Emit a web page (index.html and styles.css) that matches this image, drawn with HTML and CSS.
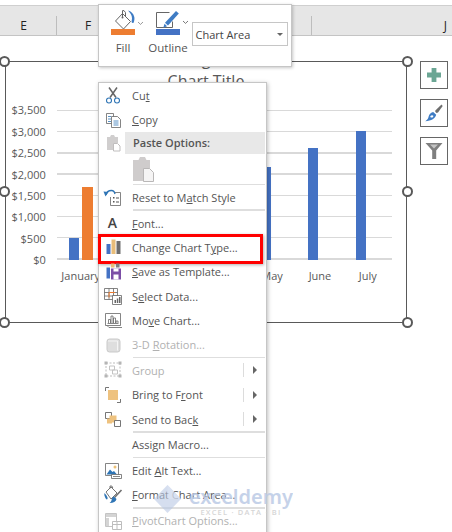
FILE: index.html
```html
<!DOCTYPE html>
<html lang="en">
<head>
<meta charset="utf-8">
<title>Chart context menu</title>
<link rel="stylesheet" href="styles.css">
</head>
<body>
<div class="stage">
  <header class="sheet-head">
    <div class="col col-e">E</div>
    <div class="col col-f">F</div>
    <div class="col col-mid"></div>
    <div class="col col-j">J</div>
  </header>

  <section class="chart">
    <div class="title">g<br>Chart Title</div>
    <div class="plot-row">
      <div class="axis">
        <span>$3,500</span><span>$3,000</span><span>$2,500</span><span>$2,000</span><span>$1,500</span><span>$1,000</span><span>$500</span><span>$0</span>
      </div>
      <div class="plot">
        <div class="grid"><i></i><i></i><i></i><i></i><i></i><i></i><i></i><i></i></div>
        <div class="bars">
          <div class="cat"><b class="bar blue" style="height:14.3%"></b><b class="bar orange" style="height:48.6%"></b></div>
          <div class="cat"><b class="bar blue" style="height:50%"></b><b class="bar orange" style="height:0"></b></div>
          <div class="cat"><b class="bar blue" style="height:60%"></b><b class="bar orange" style="height:0"></b></div>
          <div class="cat"><b class="bar blue" style="height:55%"></b><b class="bar orange" style="height:0"></b></div>
          <div class="cat"><b class="bar blue" style="height:62%"></b><b class="bar orange" style="height:0"></b></div>
          <div class="cat"><b class="bar blue" style="height:74.3%"></b><b class="bar orange" style="height:0"></b></div>
          <div class="cat"><b class="bar blue" style="height:85.7%"></b><b class="bar orange" style="height:0"></b></div>
        </div>
      </div>
    </div>
    <div class="cats">
      <span>January</span><span></span><span></span><span></span><span>May</span><span>June</span><span>July</span>
    </div>
    <i class="handle h-tl"></i><i class="handle h-ml"></i><i class="handle h-bl"></i>
    <i class="handle h-tr"></i><i class="handle h-mr"></i><i class="handle h-br"></i>
  </section>

  <aside class="side-tools">
    <div class="side-btn">
      <svg width="16" height="16" viewBox="0 0 16 16"><path fill="#6ba694" d="M5.600 1h4.800v4.600H15v4.800h-4.600V15H5.600v-4.600H1V5.600h4.600z"/></svg>
    </div>
    <div class="side-btn">
      <svg width="18" height="18" viewBox="0 0 18 18"><path fill="#6e6e6e" d="M16.500.5l1.200 1.500-4.700 6.500-1.500.5-1.300-1.300.4-1.500z"/><path fill="#3f7cc4" d="M8.200 8l3 2.800c-1 3.500-4.500 6-11 6.500 2.500-1.500 3-3 3.500-5 .5-2.300 2.500-4 4.500-4.300z"/><path fill="#fff" d="M5.500 12c.8-.9 2.200-1 2.800-.2.400.8-.7 2-1.800 1.800-1-.1-1.500-.9-1-1.600z"/></svg>
    </div>
    <div class="side-btn">
      <svg width="18" height="18" viewBox="0 0 18 18"><path fill="#7f7f7f" d="M.5 1h17l-6.300 7.500V17H7.200V8.500z"/><path fill="#c4c4c4" d="M5 2.500h8L9 6.500z"/></svg>
    </div>
  </aside>

  <div class="toolbar">
    <div class="tool">
      <svg class="tool-icon" width="24" height="26" viewBox="0 0 24 26">
        <path fill="none" stroke="#666" stroke-width="1" d="M11.500 4.500l8 8-7 7.500-8-8z"/>
        <path fill="none" stroke="#666" stroke-width="1" d="M11.500 8.500V1.600h1.500l1.500 2v4"/>
        <circle cx="11.500" cy="8.500" r="1" fill="#666"/>
        <path fill="#3f7cc4" d="M17 1.500c3 .6 5.500 3 6.300 6.500.3 1.500.2 3.500-.6 5.500-.6.800-1.500.8-2-.2-.3-1 .3-2.500.3-4 0-3-2-5.800-4-7.800z"/>
        <rect x="0" y="20" width="24" height="6" fill="#ed7d31"/>
        <path fill="#555" d="M27 13l2.500 2.400 2.500-2.400" stroke="#555" stroke-width=".6" fill-opacity="0"/>
      </svg>
      <span>Fill</span>
    </div>
    <div class="tool tool-wide">
      <svg class="tool-icon" width="24" height="26" viewBox="0 0 24 26">
        <path fill="none" stroke="#666" stroke-width="1" d="M13.500 3.500H.5v15h16v-6"/>
        <path fill="#3f7cc4" d="M20 2l2.800 2.600L12 16.500 9 13.800z"/>
        <path fill="#3f7cc4" d="M8.500 14.800l2.600 2.500-3.800 1.400z"/>
        <rect x="0" y="20" width="24" height="6" fill="#4472c4"/>
        <path d="M27 12l2.500 2.400 2.500-2.400" fill="none" stroke="#555" stroke-width=".8"/>
      </svg>
      <span>Outline</span>
    </div>
    <div class="combo"><span>Chart Area</span><i class="combo-arrow"></i></div>
  </div>

  <nav class="menu">
    <div class="row">
      <svg class="ico" viewBox="0 0 20 20"><path fill="none" stroke="#666" stroke-width="1.500" d="M6 1.500l7 10M14 1.500l-7 10"/><circle cx="6" cy="14.500" r="2.500" fill="none" stroke="#2f75b5" stroke-width="1.100"/><circle cx="14" cy="14.500" r="2.500" fill="none" stroke="#2f75b5" stroke-width="1.100"/></svg>
      <span class="label">Cu<u>t</u></span>
    </div>
    <div class="row">
      <svg class="ico" viewBox="0 0 20 20"><path fill="#fff" stroke="#666" stroke-width=".8" d="M3.500 3.500h7v10h-7z"/><path fill="#fff" stroke="#666" stroke-width=".8" d="M8.500 6.500h6l3 3v8h-9z"/><path stroke="#2f75b5" stroke-width=".8" d="M5 6.500h3M5 9h3M5 11.500h3M10.500 11h5M10.500 13h5M10.500 15h5"/></svg>
      <span class="label"><u>C</u>opy</span>
    </div>
    <div class="row row-head">
      <svg class="ico" viewBox="0 0 20 20"><path fill="#d0cece" d="M4 4h3l1-2h3l1 2h3v6h-4v7H4z"/><path fill="#fff" stroke="#c0bebe" d="M10.500 10.500h4l2.500 2.500v5h-6.500z"/></svg>
      <span class="head-label">Paste Options:</span>
    </div>
    <div class="row-paste">
      <svg width="24" height="26" viewBox="0 0 24 26"><path fill="#cfcccc" d="M2 4h5.500l1.500-3h5l1.500 3H19v9h-6v12H2z"/><path fill="#f5f4f4" stroke="#b9b7b7" d="M12.500 12.500h6l4 4v9h-10z"/></svg>
    </div>
    <div class="sep"></div>
    <div class="row">
      <svg class="ico" viewBox="0 0 20 20"><path fill="none" stroke="#666" stroke-width=".8" d="M7.500 5.500h10v13h-10z"/><path fill="#fff" d="M7 4h4v6H7z"/><path fill="#555" d="M10 10h1.500v1.500H10zM13 10.500h3v1H13zM10 14h1.500v1.500H10zM13 14.500h3v1H13z"/><path fill="none" stroke="#2f75b5" stroke-width="1.300" d="M3 8c.5-3 2.500-4.500 5.500-4.500 2 0 3 1 3.500 3.500"/><path fill="#2f75b5" d="M.5 4.500l5 .5-3 4.500z"/></svg>
      <span class="label">Reset to M<u>a</u>tch Style</span>
    </div>
    <div class="sep"></div>
    <div class="row">
      <span class="ico ico-a">A</span>
      <span class="label"><u>F</u>ont...</span>
    </div>
    <div class="row row-alert">
      <svg class="ico" viewBox="0 0 20 20"><path fill="#4472c4" d="M3.500 7h4v10h-4z"/><path fill="#e8bd7a" d="M8.500 2.500h4V17h-4z"/><path fill="#6e6e6e" d="M13.500 4h4v13h-4z"/></svg>
      <span class="label">Change Chart T<u>y</u>pe...</span>
    </div>
    <div class="row">
      <svg class="ico" viewBox="0 0 20 20"><path fill="#4472c4" d="M3.500 5.500h3.500v11H3.500z"/><path fill="#e8bd7a" d="M8 1.500h3.500v4H8z"/><path fill="#7f7f7f" d="M13 1.500h3.500v4H13z"/><path fill="#7b4ea6" d="M8 6.500h10v11H8z"/><path fill="#fff" d="M10.500 6.500h5v3h-5zM10.500 12.500h5v5h-5z"/></svg>
      <span class="label"><u>S</u>ave as Template...</span>
    </div>
    <div class="row">
      <svg class="ico" viewBox="0 0 20 20"><path fill="#fff" stroke="#666" stroke-width=".8" d="M1.500 2.500h13v11h-13z"/><path stroke="#666" stroke-width=".8" d="M1.500 6.500h13M6 2.500v11M10.500 2.500v11M1.500 10h13"/><path stroke="#ed7d31" d="M6 6.500h6M6 6.500v5"/><path fill="#fff" stroke="#666" stroke-width=".8" d="M9.500 9.500h9v9h-9z"/><path fill="#666" d="M11.500 14h1.500v3h-1.500zM13.800 12.500h1.500V17h-1.500zM16 11h1.500v6H16z"/></svg>
      <span class="label">S<u>e</u>lect Data...</span>
    </div>
    <div class="row">
      <svg class="ico" viewBox="0 0 20 20"><path fill="none" stroke="#666" stroke-width=".8" d="M2.500 3.500h15v12h-15zM4 15.500l2 2h13"/><path fill="none" stroke="#666" stroke-width=".8" d="M5.500 13V9.500h2V13M8 13V6h2v7M10.500 13V8h2v5M13 13v-2h2v2"/><path stroke="#666" stroke-width=".8" d="M4.500 13.500h11"/></svg>
      <span class="label">Mo<u>v</u>e Chart...</span>
    </div>
    <div class="row is-off">
      <svg class="ico" viewBox="0 0 20 20"><rect x="4" y="4" width="13" height="13" rx="2.500" fill="#dedede" stroke="#c9c9c9"/><path fill="none" stroke="#f4f4f4" d="M5 6h9.500v9.500"/></svg>
      <span class="label">3-D <u>R</u>otation...</span>
    </div>
    <div class="sep"></div>
    <div class="row is-off">
      <svg class="ico" viewBox="0 0 20 20"><path fill="none" stroke="#bdbdbd" stroke-dasharray="2 1.500" d="M3 3h14v13H3z"/><path fill="none" stroke="#c4c4c4" d="M6.500 6h5v4h-5zM9.500 10h5v4h-5z"/><path fill="#b5b5b5" d="M1.500 1.500h3v3h-3zM15.500 1.500h3v3h-3zM1.500 14.500h3v3h-3zM15.500 14.500h3v3h-3z"/></svg>
      <span class="label">Group</span>
      <span class="sub"><i></i></span>
    </div>
    <div class="row">
      <svg class="ico" viewBox="0 0 20 20"><path fill="none" stroke="#666" stroke-width=".9" d="M2.500 6V2.500H6M14 17.500h3.500V14"/><path fill="#eec27f" d="M5 5h10v10H5z"/></svg>
      <span class="label">Bring to F<u>r</u>ont</span>
      <span class="sub"><i></i></span>
    </div>
    <div class="row">
      <svg class="ico" viewBox="0 0 20 20"><path fill="#fff" stroke="#666" stroke-width=".9" d="M2.500 3.500h6v6h-6z"/><path fill="#eec27f" d="M6.500 6.500h7v7h-7z"/><path fill="#eec27f" d="M4 9.500h5v5H4z"/><path fill="#fff" stroke="#666" stroke-width=".9" d="M11.500 11.500h6v6h-6z"/></svg>
      <span class="label">Send to Bac<u>k</u></span>
      <span class="sub"><i></i></span>
    </div>
    <div class="sep"></div>
    <div class="row">
      <span class="ico"></span>
      <span class="label">Assi<u>g</u>n Macro...</span>
    </div>
    <div class="sep"></div>
    <div class="row">
      <svg class="ico" viewBox="0 0 20 20"><path fill="#fff" stroke="#666" stroke-width=".8" d="M2.500 2.500h13v12h-13z"/><path fill="#2f75b5" d="M3.500 13.500l3.500-5 2.500 2.500 1.500-1 3 3.500z"/><circle cx="12" cy="6" r="1.500" fill="#ecc074"/><path fill="#fff" stroke="#666" stroke-width=".8" d="M8.500 13.500h10v4h-10z"/><path stroke="#888" d="M10 15.500h7"/></svg>
      <span class="label">Edit <u>A</u>lt Text...</span>
    </div>
    <div class="row">
      <svg class="ico" viewBox="0 0 20 20"><path fill="#fff" stroke="#666" stroke-width=".9" d="M3 7l5-5 6 6-6 6z"/><path fill="none" stroke="#666" stroke-width=".9" d="M7 3.500V1h1.800l1 2"/><path fill="#2f75b5" d="M1.500 8c-.5 2 0 3.500 1.500 6 1 1 2 0 1.500-1.500-.5-1.500-1.500-3-3-4.500z"/><path stroke="#6e6e6e" stroke-width="1.600" d="M18.500 5l-7 7.500"/><path fill="#2f75b5" d="M11 11.500l2.500 2.500c-.5 2.500-3 4-7 4 2-1.200 2-2.500 2.300-4 .3-1.200 1-2.200 2.200-2.500z"/></svg>
      <span class="label"><u>F</u>ormat Chart Area...</span>
    </div>
    <div class="sep"></div>
    <div class="row is-off">
      <svg class="ico" viewBox="0 0 20 20"><path fill="#fff" stroke="#c4c4c4" d="M2.500 2.500h11v13h-11z"/><path fill="#d4d4d4" d="M3 3h10v3H3zM3 7h3v8H3z"/><path fill="#fff" stroke="#bdbdbd" d="M9.500 10.500h9v8h-9z"/><path stroke="#bdbdbd" d="M9.500 13.500h9M14 10.500v8"/></svg>
      <span class="label"><u>P</u>ivotChart Options...</span>
    </div>
  </nav>

  <div class="watermark">
    <svg class="wm-logo" width="27" height="28" viewBox="0 0 27 28"><path fill="#b9c9e6" opacity=".7" d="M13.500 0L27 14 13.500 28 0 14z"/><path fill="#d6dff0" opacity=".8" d="M13.500 0L27 14H13.500z"/></svg>
    <div class="wm-text">
      <span class="wm-name">exceldemy</span>
      <span class="wm-sub">EXCEL · DATA · BI</span>
    </div>
  </div>
</div>
</body>
</html>
```

FILE: styles.css
```css
* { box-sizing: border-box; }

html, body {
  margin: 0;
  padding: 0;
  background: #fff;
}

.stage {
  position: relative;
  width: 452px;
  height: 532px;
  overflow: hidden;
  padding-top: 5px;
  font-family: "Open Sans", "Liberation Sans", sans-serif;
  font-size: 11px;
  color: #555;
}

/* Column header */
.sheet-head {
  display: flex;
  align-items: flex-end;
  height: 31px;
  margin-left: -9px;
  background: #e6e6e6;
  border-top: 1px solid #cfcfcf;
  border-bottom: 1px solid #c4c4c4;
  width: 461px;
}

.col {
  height: 19px;
  line-height: 19px;
  text-align: center;
  font-size: 12px;
  color: #222;
  flex: none;
  border-right: 1px solid #bdbdbd;
}

.col-e { width: 66px; }
.col-f { width: 63px; }
.col-mid { width: 192px; }
.col-j {
  flex: 1;
  border-right: 0;
  text-align: right;
  padding-right: 5px;
}

/* Chart */
.chart {
  position: absolute;
  left: 4.750px;
  top: 61.250px;
  width: 402.500px;
  height: 261.500px;
  border: 1.5px solid #595959;
  color: #595959;
}

.title {
  margin-top: -14px;
  margin-bottom: 17.500px;
  height: 44px;
  line-height: 22px;
  font-size: 16px;
  text-align: center;
}

.plot-row {
  display: flex;
  gap: 11px;
  height: 150px;
}

.axis {
  display: flex;
  flex-direction: column;
  justify-content: space-between;
  width: 40px;
  height: 166px;
  margin-top: -7.500px;
  text-align: right;
}

.axis span {
  line-height: 16px;
}

.plot {
  position: relative;
  width: 335px;
}

.grid {
  position: absolute;
  inset: 0;
  display: flex;
  flex-direction: column;
  justify-content: space-between;
}

.grid i {
  display: block;
  height: 1.5px;
  background: #d9d9d9;
}

.bars {
  position: absolute;
  inset: 0;
  display: flex;
}

.cat {
  flex: 1;
  display: flex;
  align-items: flex-end;
  justify-content: center;
  gap: 3px;
}

.bar {
  display: block;
  width: 10.500px;
}

.blue { background: #4472c4; }
.orange { background: #ed7d31; }

.cats {
  display: flex;
  margin-left: 51px;
  width: 335px;
  margin-top: 8px;
}

.cats span {
  flex: 1 1 0;
  min-width: 0;
  text-align: center;
  white-space: nowrap;
  line-height: 16px;
}

.handle {
  position: absolute;
  width: 11px;
  height: 11px;
  border-radius: 50%;
  background: #fff;
  border: 2.500px solid #595959;
}

.h-tl { left: -6.500px; top: -6.500px; }
.h-ml { left: -6.500px; top: 124px; }
.h-bl { left: -6.500px; bottom: -6.500px; }
.h-tr { right: -6.500px; top: -6.500px; }
.h-mr { right: -6.500px; top: 124px; }
.h-br { right: -6.500px; bottom: -6.500px; }

/* Side buttons */
.side-tools {
  position: absolute;
  left: 420px;
  top: 61px;
  display: flex;
  flex-direction: column;
  gap: 10px;
}

.side-btn {
  display: flex;
  align-items: center;
  justify-content: center;
  width: 28px;
  height: 28px;
  background: #fff;
  border: 1.5px solid #666;
}

/* Mini toolbar */
.toolbar {
  position: absolute;
  left: 98px;
  top: 4px;
  display: flex;
  width: 194px;
  height: 62.500px;
  padding: 4px 0 0 6px;
  background: #fff;
  border: 1.5px solid #c6c6c6;
  box-shadow: 1px 1px 3px rgba(0, 0, 0, .22);
}

.tool {
  display: flex;
  flex-direction: column;
  align-items: center;
  width: 36px;
  margin-right: 6px;
}

.tool-wide {
  width: 42px;
  margin-right: 3px;
}

.tool-icon {
  overflow: visible;
  flex: none;
}

.tool span {
  margin-top: 5px;
  line-height: 16px;
  font-size: 11.500px;
}

.combo {
  display: flex;
  align-items: center;
  justify-content: space-between;
  width: 95.500px;
  height: 24px;
  margin-top: 13px;
  padding: 0 4px 0 2.500px;
  border: 1.5px solid #c6c6c6;
  font-size: 11px;
  color: #444;
}

.combo-arrow {
  width: 0;
  height: 0;
  border-left: 3.500px solid transparent;
  border-right: 3.500px solid transparent;
  border-top: 3.500px solid #666;
}

/* Context menu */
.menu {
  position: absolute;
  left: 98px;
  top: 82px;
  width: 169px;
  height: 460px;
  padding: .5px 1px 0 1px;
  background: #fff;
  border: 1.5px solid #c6c6c6;
  box-shadow: 1px 1px 4px rgba(0, 0, 0, .25);
}

.row {
  position: relative;
  display: flex;
  align-items: center;
  height: 24.300px;
  padding-left: 2.500px;
}

.ico {
  flex: none;
  width: 20px;
  height: 20px;
  margin-right: 9.500px;
}

.ico-a {
  line-height: 20px;
  text-align: center;
  font-size: 14px;
  font-weight: 600;
  color: #444;
}

.label {
  color: #555;
  white-space: nowrap;
}

.is-off .label { color: #b1b1b1; }

.row-head {
  height: 21.600px;
}

.row-head .ico {
  margin-right: 2.500px;
}

.head-label {
  flex: 1;
  align-self: stretch;
  padding-left: 8px;
  line-height: 21.600px;
  font-weight: 600;
  background: #e8e8e8;
  color: #555;
}

.row-paste {
  display: flex;
  align-items: center;
  height: 30px;
  padding-left: 31px;
}

.sep {
  height: 1.500px;
  margin-left: 33px;
  background: #dedede;
}

.sub {
  display: flex;
  align-items: center;
  height: 14px;
  width: 22px;
  margin-left: auto;
  padding-left: 9px;
  border-left: 1px solid #dcdcdc;
}

.sub i {
  width: 0;
  height: 0;
  border-top: 4px solid transparent;
  border-bottom: 4px solid transparent;
  border-left: 4px solid #666;
}

.row-alert::after {
  content: "";
  position: absolute;
  left: -2px;
  right: 2.500px;
  top: -1px;
  bottom: -4px;
  border: 3px solid #f00;
  box-shadow: 1px 1px 3px rgba(0, 0, 0, .3);
}

/* Watermark */
.watermark {
  position: absolute;
  left: 154px;
  top: 485px;
  display: flex;
  gap: 8px;
  color: #bccbe6;
  opacity: .85;
}

.wm-text {
  display: flex;
  flex-direction: column;
  align-items: center;
}

.wm-name {
  font-family: "Noto Sans", sans-serif;
  font-size: 20px;
  font-weight: 600;
  line-height: 23px;
}

.wm-sub {
  font-size: 7.500px;
  line-height: 8px;
  font-weight: 600;
  letter-spacing: 1.200px;
  color: #cfcfcf;
}
```
